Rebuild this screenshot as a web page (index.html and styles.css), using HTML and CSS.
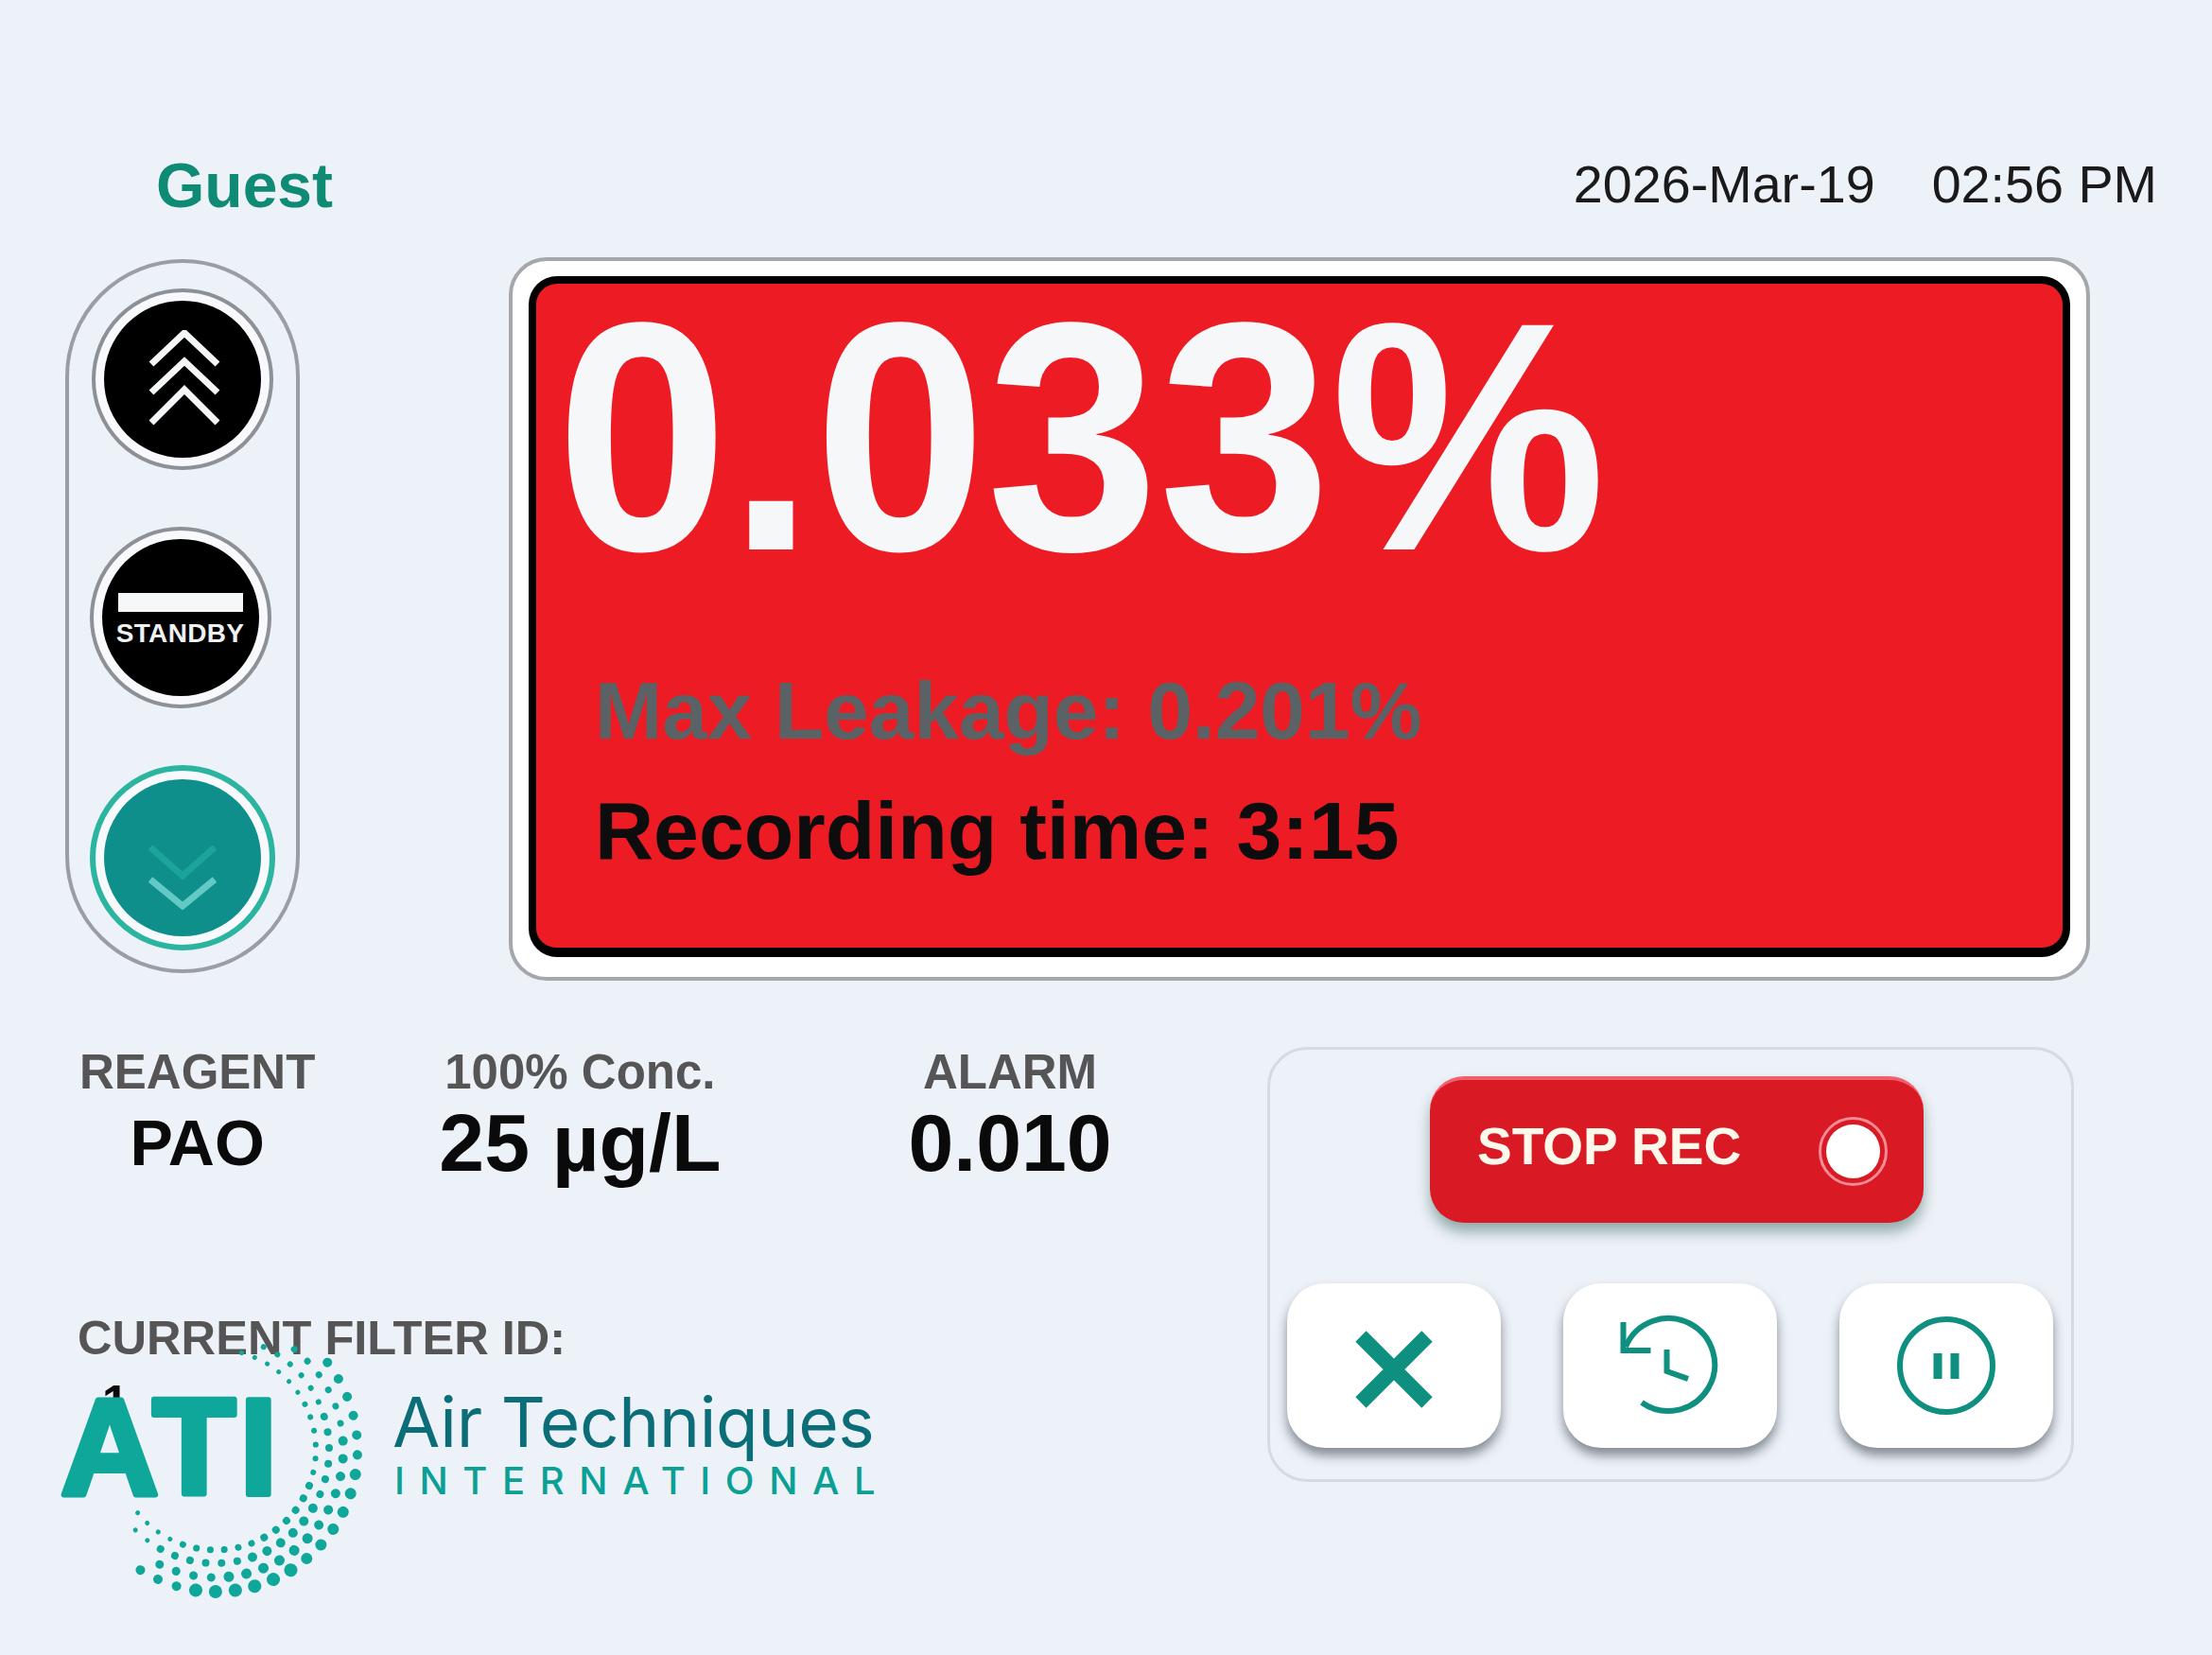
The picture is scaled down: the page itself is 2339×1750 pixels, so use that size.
FILE: index.html
```html
<!DOCTYPE html>
<html lang="en">
<head>
<meta charset="utf-8">
<title>Air Techniques International</title>
<link rel="stylesheet" href="styles.css">
</head>
<body>
<div class="screen">
  <header class="topbar">
    <span class="user">Guest</span>
    <span class="clock"><span>2026-Mar-19</span><span>02:56 PM</span></span>
  </header>

  <main class="main-row">
    <nav class="pill">
      <div class="round">
        <div class="face">
          <svg class="chev-up" viewBox="0 0 76 104"><path d="M3 36 38 3 73 36M3 66 38 33 73 66M3 98 38 63 73 98"/></svg>
        </div>
      </div>
      <div class="round round-mid">
        <div class="face face-standby">
          <span class="standby-bar"></span>
          <span class="standby-text">STANDBY</span>
        </div>
      </div>
      <div class="round round-active">
        <div class="face face-active">
          <svg class="chev-down" viewBox="0 0 76 70"><path class="faint" d="M4 4 38 34 72 4"/><path class="bright" d="M4 38 38 66 72 38"/></svg>
        </div>
      </div>
    </nav>

    <section class="readout-frame">
      <div class="readout">
        <div class="reading">0.033%</div>
        <div class="max-leak">Max Leakage: 0.201%</div>
        <div class="rec-time">Recording time: 3:15</div>
      </div>
    </section>
  </main>

  <section class="bottom-row">
    <div class="info">
      <div class="stats">
        <div class="stat"><div class="stat-label">REAGENT</div><div class="stat-value stat-value-small">PAO</div></div>
        <div class="stat"><div class="stat-label">100% Conc.</div><div class="stat-value">25 µg/L</div></div>
        <div class="stat"><div class="stat-label">ALARM</div><div class="stat-value">0.010</div></div>
      </div>
      <div class="filter-label">CURRENT FILTER ID:</div>
      <div class="filter-value">1</div>
    </div>

    <div class="controls">
      <button class="stop-btn"><span>STOP REC</span><span class="rec-dot"></span></button>
      <div class="tool-row">
        <button class="tool">
          <svg class="icon-x" viewBox="0 0 84 82"><path d="M7 6 77 76M77 6 7 76"/></svg>
        </button>
        <button class="tool">
          <svg class="icon-line" viewBox="0 0 120 120"><path d="M13 40A49 49 0 1 1 30 99"/><path d="M10.5 14V44H39.5"/><path d="M56.5 43V66L79 74"/></svg>
        </button>
        <button class="tool">
          <svg class="icon-line" viewBox="0 0 120 120"><circle cx="60" cy="60" r="49"/><path class="bars" d="M51 47V74M69 47V74"/></svg>
        </button>
      </div>
    </div>
  </section>

  <svg class="logo" viewBox="0 1380 1000 320">
    <rect class="logo-patch" x="60" y="1478" width="240" height="110"/>
    <text class="logo-ati" x="64" y="1580">ATI</text>
    <g class="swirl" transform="translate(228 1533)">
      <circle r="106" pathLength="360" class="w5 n6" transform="rotate(-75)"/>
      <circle r="106" pathLength="360" class="w6 n6" transform="rotate(-27)"/>
      <circle r="106" pathLength="360" class="w8 n6" transform="rotate(21)"/>
      <circle r="106" pathLength="360" class="w7 n6" transform="rotate(69)"/>
      <circle r="106" pathLength="360" class="w5 n4" transform="rotate(117)"/>
      <circle r="120" pathLength="360" class="w6 n6" transform="rotate(-65)"/>
      <circle r="120" pathLength="360" class="w8 n6" transform="rotate(-17)"/>
      <circle r="120" pathLength="360" class="w10 n6" transform="rotate(31)"/>
      <circle r="120" pathLength="360" class="w8 n6" transform="rotate(79)"/>
      <circle r="120" pathLength="360" class="w5 n2" transform="rotate(127)"/>
      <circle r="135" pathLength="360" class="w7 n6" transform="rotate(-52)"/>
      <circle r="135" pathLength="360" class="w10 n6" transform="rotate(-4)"/>
      <circle r="135" pathLength="360" class="w11 n6" transform="rotate(44)"/>
      <circle r="135" pathLength="360" class="w9 n4" transform="rotate(92)"/>
      <circle r="150" pathLength="360" class="w10 n6" transform="rotate(-38)"/>
      <circle r="150" pathLength="360" class="w12 n6" transform="rotate(10)"/>
      <circle r="150" pathLength="360" class="w14 n6" transform="rotate(58)"/>
      <circle r="150" pathLength="360" class="w10 n3" transform="rotate(106)"/>
    </g>
    <text class="logo-name" x="415" y="1530">Air Techniques</text>
    <text class="logo-sub" x="417" y="1580">INTERNATIONAL</text>
  </svg>
</div>
</body>
</html>
```

FILE: styles.css
```css
* { box-sizing: border-box; }

html, body { margin: 0; padding: 0; }

body {
  background: #edf1f8;
  font-family: "Liberation Sans", Arial, sans-serif;
}

.screen {
  position: relative;
  width: 2339px;
  height: 1750px;
  overflow: hidden;
  background: #edf1f8;
}

/* top bar */
.topbar {
  display: flex;
  justify-content: space-between;
  align-items: center;
  height: 70px;
  margin-top: 161px;
  padding: 0 58px 0 165px;
  position: absolute;
  top: 0; left: 0; right: 0;
}

.user {
  font-size: 66px;
  font-weight: 700;
  color: #0f8a74;
}

.clock {
  display: flex;
  gap: 60px;
  margin-top: -2px;
  font-size: 55.7px;
  color: #1a1a1a;
}

/* main */
.main-row {
  display: flex;
  align-items: flex-start;
  gap: 221px;
  padding: 272px 0 0 69px;
}

.pill {
  width: 248px;
  height: 755px;
  margin-top: 2px;
  border: 4px solid #9a9da3;
  border-radius: 124px;
  display: flex;
  flex-direction: column;
  align-items: center;
  gap: 60px;
  padding-top: 27px;
}

.round {
  width: 192px;
  height: 192px;
  flex: none;
  border: 4px solid #8d9095;
  border-radius: 50%;
  padding: 9px;
  background: #f7f9fc;
}

.round-mid { margin-left: -5px; }

.round-active {
  width: 196px;
  height: 196px;
  margin-left: -1px;
  border: 6px solid #2bb5a0;
  padding: 9px;
}

.face {
  width: 100%;
  height: 100%;
  border-radius: 50%;
  background: #000;
  display: flex;
  align-items: center;
  justify-content: center;
}

.chev-up {
  width: 76px;
  height: 104px;
  margin-left: 3px;
  fill: none;
  stroke: #f4f6f8;
  stroke-width: 7;
}

.face-standby {
  flex-direction: column;
  padding-top: 4px;
}

.standby-bar {
  width: 132px;
  height: 20px;
  background: #f6f7f8;
}

.standby-text {
  margin-top: 10px;
  font-size: 28px;
  line-height: 26px;
  font-weight: 700;
  letter-spacing: .3px;
  color: #f0f1f2;
}

.face-active {
  background: #0e8f8c;
  padding-top: 40px;
}

.chev-down {
  width: 84px;
  height: 70px;
  fill: none;
  stroke-width: 7;
}

.chev-down .faint { stroke: #1ba39c; }
.chev-down .bright { stroke: #62c9c4; }

.readout-frame {
  width: 1672px;
  height: 765px;
  border: 4px solid #a4a7ac;
  border-radius: 40px;
  background: #fff;
  padding: 16px 17px 21px;
}

.readout {
  height: 100%;
  border: 8px solid #000;
  border-bottom-width: 10px;
  border-radius: 30px;
  background: #ed1c24;
  padding-left: 32px;
}

.reading {
  margin: 0 0 0 -11px;
  font-size: 330px;
  line-height: 310px;
  font-weight: 700;
  color: #f5f7f8;
  transform: scale(.992, 1.045);
  transform-origin: left top;
}

.max-leak {
  margin: 92px 0 0 30px;
  font-size: 85.5px;
  line-height: 100px;
  font-weight: 700;
  color: #5a6265;
}

.rec-time {
  margin: 26px 0 0 30px;
  font-size: 86px;
  line-height: 100px;
  font-weight: 700;
  color: #0d0d0d;
}

/* bottom */
.bottom-row {
  display: flex;
  align-items: flex-start;
  justify-content: space-between;
  padding: 70px 146px 0 82px;
}

.stats {
  display: flex;
  align-items: flex-start;
  gap: 131px;
  padding-left: 2px;
}

.stat { text-align: center; }

.stats .stat:last-child { margin-left: 67px; }

.stat-label {
  font-size: 51px;
  line-height: 54px;
  font-weight: 700;
  color: #555;
}

.stat-value {
  font-size: 86px;
  line-height: 94px;
  font-weight: 700;
  color: #0a0a0a;
}

.stat-value-small {
  font-size: 68px;
}

.filter-label {
  margin-top: 132px;
  font-size: 50.6px;
  line-height: 56px;
  font-weight: 700;
  color: #555;
}

.filter-value {
  margin: 15px 0 0 26px;
  font-size: 50px;
  line-height: 50px;
  font-weight: 700;
  color: #0a0a0a;
}

.controls {
  width: 853px;
  height: 460px;
  border: 3px solid #d5dae3;
  border-radius: 42px;
  padding: 28px 18px 0;
  display: flex;
  flex-direction: column;
  align-items: flex-start;
}

.stop-btn {
  width: 522px;
  height: 155px;
  margin-left: 151px;
  border: 0;
  border-top: 4px solid #f0606c;
  border-radius: 36px;
  background: #d91a25;
  box-shadow: 0 10px 14px rgba(40, 90, 80, .45);
  display: flex;
  align-items: center;
  justify-content: space-between;
  padding: 0 38px 12px 50px;
  font-family: inherit;
  font-size: 55px;
  font-weight: 700;
  color: #fdf8ec;
}

.rec-dot {
  width: 73px;
  height: 73px;
  border-radius: 50%;
  border: 3px solid #f58b95;
  padding: 5px;
  margin-top: 12px;
  background: #fff content-box;
}

.tool-row {
  display: flex;
  gap: 66px;
  margin-top: 64px;
}

.tool {
  width: 226px;
  height: 174px;
  flex: none;
  border: 0;
  border-radius: 40px;
  background: #fff;
  box-shadow: 0 8px 12px rgba(60, 70, 80, .6);
  padding: 0;
  display: flex;
  align-items: center;
  justify-content: center;
}

.icon-x {
  width: 84px;
  height: 82px;
  margin-top: 8px;
  fill: none;
  stroke: #0f8f7f;
  stroke-width: 16;
}

.icon-line {
  width: 120px;
  height: 120px;
  fill: none;
  stroke: #0f8f7f;
  stroke-width: 6;
}

.icon-line .bars { stroke-width: 9; }

/* logo overlay */
.logo {
  position: absolute;
  left: 0;
  top: 1380px;
  width: 1000px;
  height: 320px;
}

.logo-patch { fill: #edf1f8; }

.logo-ati {
  font-family: "Liberation Sans", Arial, sans-serif;
  font-size: 144px;
  font-weight: 700;
  letter-spacing: 4px;
  fill: #0ea79a;
  stroke: #0ea79a;
  stroke-width: 6;
  stroke-linejoin: round;
}

.logo-name {
  font-family: Inter, "Liberation Sans", sans-serif;
  font-size: 73px;
  letter-spacing: -.4px;
  fill: #0b6d78;
}

.logo-sub {
  font-family: Inter, "Liberation Sans", sans-serif;
  font-size: 40px;
  font-weight: 500;
  letter-spacing: 15.6px;
  fill: #0aa095;
}

.swirl circle {
  fill: none;
  stroke: #0ea79a;
  stroke-linecap: round;
}

.w5 { stroke-width: 5; }
.w6 { stroke-width: 6; }
.w7 { stroke-width: 7; }
.w8 { stroke-width: 8; }
.w9 { stroke-width: 9; }
.w10 { stroke-width: 10; }
.w11 { stroke-width: 11; }
.w12 { stroke-width: 12; }
.w14 { stroke-width: 14; }

.n2 { stroke-dasharray: .01 8 .01 3000; }
.n3 { stroke-dasharray: .01 8 .01 8 .01 3000; }
.n4 { stroke-dasharray: .01 8 .01 8 .01 8 .01 3000; }
.n6 { stroke-dasharray: .01 8 .01 8 .01 8 .01 8 .01 8 .01 3000; }
```
